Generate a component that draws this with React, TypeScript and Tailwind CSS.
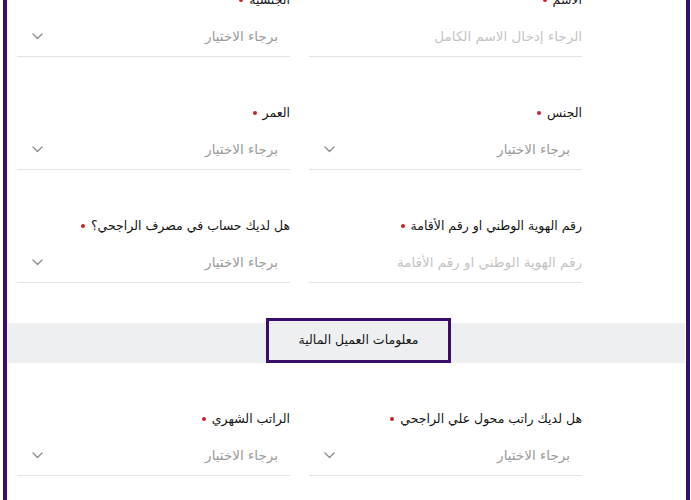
import React from 'react';

type Field = { label: string; kind: 'input' | 'select'; placeholder: string };

const rows: Field[][] = [
  [
    { label: 'الاسم', kind: 'input', placeholder: 'الرجاء إدخال الاسم الكامل' },
    { label: 'الجنسية', kind: 'select', placeholder: 'برجاء الاختيار' },
  ],
  [
    { label: 'الجنس', kind: 'select', placeholder: 'برجاء الاختيار' },
    { label: 'العمر', kind: 'select', placeholder: 'برجاء الاختيار' },
  ],
  [
    { label: 'رقم الهوية الوطني او رقم الأقامة', kind: 'input', placeholder: 'رقم الهوية الوطني او رقم الأقامة' },
    { label: 'هل لديك حساب في مصرف الراجحي؟', kind: 'select', placeholder: 'برجاء الاختيار' },
  ],
];

const financial: Field[] = [
  { label: 'هل لديك راتب محول علي الراجحي', kind: 'select', placeholder: 'برجاء الاختيار' },
  { label: 'الراتب الشهري', kind: 'select', placeholder: 'برجاء الاختيار' },
];

function Chevron() {
  return (
    <svg width="11" height="7" viewBox="0 0 11 7" fill="none">
      <polyline points="1,1 5.5,5.5 10,1" stroke="#8a8a8a" strokeWidth="1.3" strokeLinecap="round" strokeLinejoin="round" />
    </svg>
  );
}

function FormField({ field }: { field: Field }) {
  return (
    <div className="flex flex-col">
      <div className="flex h-[20px] items-center gap-[6px] text-[12.5px] font-medium text-[#151515]">
        <span>{field.label}</span>
        <span className="h-[4px] w-[4px] rounded-full bg-[#c8232c]" />
      </div>
      <div
        className={
          'mt-[6px] flex h-[41px] items-center justify-between border-b border-[#e3e3e3] text-[13.5px] ' +
          (field.kind === 'select' ? 'pr-[12px] pl-[15px] text-[#9a9a9a]' : 'text-[#c4c4c4]')
        }
      >
        <span>{field.placeholder}</span>
        {field.kind === 'select' && <Chevron />}
      </div>
    </div>
  );
}

function FieldRow({ fields }: { fields: Field[] }) {
  return (
    <div className="grid grid-cols-[273px_273px] gap-x-[19px] pl-[10px] pr-[104px]">
      {fields.map((f) => (
        <FormField key={f.label} field={f} />
      ))}
    </div>
  );
}

export default function App() {
  return (
    <div
      dir="rtl"
      className="flex h-[500px] w-[691px] overflow-hidden bg-white px-[1px] pl-[3px]"
      style={{ fontFamily: '"DejaVu Sans", sans-serif' }}
    >
      <div className="h-[500px] flex-1 overflow-hidden border-x-[4px] border-[#3a0c6b] bg-white">
        <div className="-mt-[10px] flex flex-col gap-[46px]">
          {rows.map((r, i) => (
            <FieldRow key={i} fields={r} />
          ))}
        </div>

        {/* Financial info section header */}
        <div className="mt-[35px] flex h-[45px] items-end px-[1px]">
          <div className="relative flex h-[40px] w-full bg-[#eeeff1]">
            <div className="absolute bottom-0 right-[234px] flex h-[45px] w-[185px] items-center justify-center border-[3px] border-[#3a0c6b] bg-[#eeeff1] text-[12.5px] font-medium text-[#151515]">
              معلومات العميل المالية
            </div>
          </div>
        </div>

        <div className="mt-[46px]">
          <FieldRow fields={financial} />
        </div>
      </div>
    </div>
  );
}
